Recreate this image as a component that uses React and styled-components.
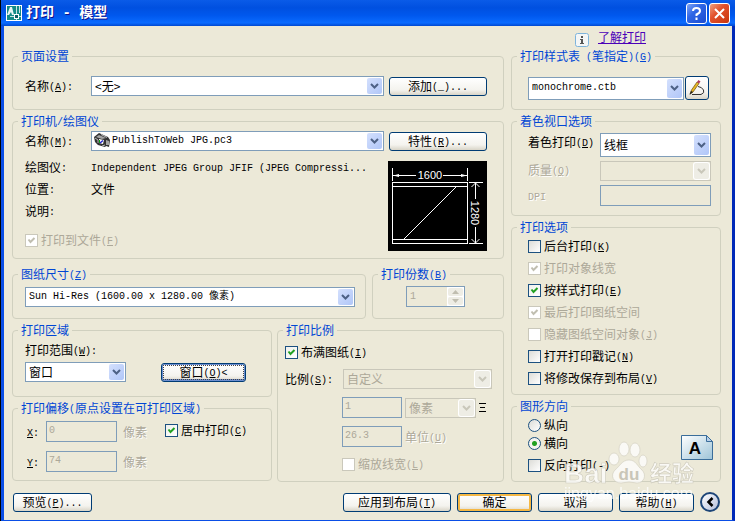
import React from 'react';
import styled, {createGlobalStyle, css} from 'styled-components';

const sans = '"Noto Sans CJK SC", "Noto Sans", sans-serif';
const mono = '"Liberation Mono", "Noto Sans CJK SC", monospace';

const face = '#ece9d8';
const muted = '#aca899';
const edge = '#7f9db9';
const navy = '#003c74';

const GlobalStyle = createGlobalStyle`
    * {
        box-sizing: border-box;
    }
    body {
        margin: 0;
        background: #000;
        color: #000;
        font: 12px/18px ${sans};
    }
    button, input, select {
        margin: 0;
        color: inherit;
        font: inherit;
    }
`;

const Window = styled.div`
    position: relative;
    display: flex;
    flex-direction: column;
    min-height: 100vh;
    margin-left: 1px;
    background: ${face};
    border: solid #0a4ee6;
    border-width: 0 3px 1px;
    border-right-color: #0029b8;
`;

/* ---------- title bar ---------- */

const TitleBar = styled.header`
    display: flex;
    align-items: center;
    gap: 2px;
    height: 26px;
    margin: 0 -3px;
    padding: 0 5px;
    background: linear-gradient(#0a5be8 0, #0050e0 30%, #0058ee 60%, #0a6bff 88%, #0048d0 100%);
`;

const Title = styled.h1`
    flex: 1;
    margin: 0 0 0 2px;
    color: #fff;
    font: bold 14px/20px ${mono};
    text-shadow: 1px 1px #0f1089;
`;

const CaptionButton = styled.button`
    display: flex;
    width: 21px;
    height: 21px;
    padding: 0;
    align-items: center;
    justify-content: center;
    border: 1px solid #fff;
    border-radius: 3px;
    background: ${({$danger}) => $danger
        ? 'linear-gradient(135deg, #f0a080, #e2522d 40%, #c8350c)'
        : 'linear-gradient(135deg, #7fa5f5, #2f66e6 40%, #1a4bd0)'};
`;

/* ---------- text ---------- */

const Latin = styled.span`
    font-family: ${mono};
    font-size: 10px;
    line-height: 1;
    vertical-align: 1px;
    white-space: pre;
`;

// разбивает строку: латиница моноширинным, "&X" - клавиша доступа
const Mixed = ({text}) => (
    <React.Fragment>
        {text.split(/([\x20-\x7e]+)/).filter(Boolean).map((part, id) => {
            if (!/^[\x20-\x7e]/.test(part)) return part;
            const [before, after] = part.split('&');
            return (
                <Latin key={id}>
                    {before}
                    {after && <u>{after[0]}</u>}
                    {after && after.slice(1)}
                </Latin>
            );
        })}
    </React.Fragment>
);

const Caption = styled.label`
    white-space: nowrap;
    ${({$off}) => $off && css`
        color: ${muted};
        text-shadow: 1px 1px #fff;
    `}
`;

const Info = styled.dl`
    display: grid;
    grid-template-columns: 66px minmax(0, 1fr);
    grid-auto-rows: 22px;
    margin: 0;
    line-height: 22px;
    white-space: nowrap;

    dd {
        margin: 0;
    }
`;

/* ---------- groups ---------- */

const Group = styled.fieldset`
    display: flex;
    flex-direction: column;
    flex: ${({$fill}) => $fill ? '1' : 'none'};
    min-width: 0;
    margin: 0 0 ${({$after}) => $after || 0}px;
    padding: 0;
    border: 1px solid #d0d0bf;
    border-radius: 4px;
`;

const Legend = styled.legend`
    height: 14px;
    margin-left: 5px;
    padding: 0 3px;
    color: #0046d5;
    line-height: 14px;
    white-space: nowrap;
`;

const GroupBody = styled.div`
    display: flex;
    flex: 1;
    flex-direction: column;
    justify-content: ${({$fill}) => $fill ? 'space-between' : 'flex-start'};
    padding: ${({$pad}) => $pad};
`;

const Panel = ({title, children, pad, fill, after}) => (
    <Group $fill={fill} $after={after}>
        <Legend><Mixed text={title}/></Legend>
        <GroupBody $pad={pad} $fill={fill}>{children}</GroupBody>
    </Group>
);

const Row = styled.div`
    display: flex;
    align-items: ${({$align}) => $align || 'center'};
    gap: ${({$gap}) => $gap || 0}px;
`;

const Stack = styled.div`
    display: flex;
    flex-direction: column;
    min-width: 0;
    gap: ${({$gap}) => $gap || 0}px;
`;

const Split = styled.div`
    display: grid;
    grid-template-columns: ${({$cols}) => $cols};
    align-items: ${({$align}) => $align || 'stretch'};
    gap: ${({$gap}) => $gap || 0}px;
`;

const HelpLine = styled.div`
    display: flex;
    justify-content: flex-end;
    gap: 9px;
    height: 23px;
    padding: 2px 86px 0 0;

    svg {
        margin-top: 5px;
    }
    a {
        color: #4b00b8;
    }
`;

const Columns = styled.main`
    display: grid;
    grid-template-columns: minmax(0, 492fr) minmax(0, 210fr);
    gap: 7px;
    padding: 0 11px 0 8px;
`;

const PrinterInfo = styled.div`
    display: flex;
    flex: 1;
    flex-direction: column;
    min-width: 0;
    gap: 9px;
    padding-top: 5px;
`;

const Preview = styled.svg`
    flex: none;
    margin-top: 10px;
    background: #000;
`;

const ScaleFields = styled(Stack)`
    padding-left: 57px;
`;

const LastCheck = styled.div`
    padding-top: 4px;
`;

const OrientationMark = styled.div`
    margin-left: auto;
    padding-top: 4px;
    line-height: 0;
`;

const Footer = styled.footer`
    display: flex;
    align-items: center;
    gap: 6px;
    padding: 10px 12px 7px 9px;
`;

const Spacer = styled.div`
    flex: 1;
`;

/* ---------- controls ---------- */

const Button = styled.button`
    flex: none;
    width: ${({$width}) => $width}px;
    height: ${({$height}) => $height || 19}px;
    padding: 0;
    border: 1px solid ${navy};
    border-radius: 3px;
    background: linear-gradient(#fff, #f4f3ee 70%, #d9d5c8);
    line-height: 16px;
    white-space: nowrap;
    ${({$kind}) => $kind === 'default' && css`
        box-shadow: inset 0 0 0 2px #f5b845;
    `}
    ${({$kind}) => $kind === 'focus' && css`
        box-shadow: inset 0 0 0 1px #6d8fd0, inset 0 -2px #6d8fd0;
        outline: 1px dotted #444;
        outline-offset: -3px;
    `}
`;

const ToolButton = styled(Button)`
    display: flex;
    align-items: center;
    justify-content: center;
`;

const RoundButton = styled.button`
    display: flex;
    width: 20px;
    height: 20px;
    padding: 0;
    align-items: center;
    justify-content: center;
    border: 2px solid #1d4578;
    border-radius: 50%;
    background: linear-gradient(135deg, #fff, #b4bfdb);
`;

const TextBox = styled.input`
    width: ${({$width}) => $width ? `${$width}px` : '100%'};
    height: 21px;
    padding: 0 2px 3px;
    border: 1px solid ${edge};
    background: ${face};
    color: ${muted};
    font: 10px/16px ${mono};
`;

const SelectBox = styled.span`
    position: relative;
    display: block;
    flex: ${({$width}) => $width ? 'none' : '1 0 auto'};
    width: ${({$width}) => $width ? `${$width}px` : 'auto'};
    height: ${({$height}) => $height || 20}px;
    min-width: 0;

    select {
        display: block;
        width: 100%;
        height: 100%;
        padding: 0 18px 0 ${({$inset}) => $inset || 3}px;
        appearance: none;
        border: 1px solid ${edge};
        border-radius: 0;
        background: #fff;
        font: ${({$latin}) => $latin ? `10px/16px ${mono}` : `12px/16px ${sans}`};
    }
    select:disabled {
        border-color: #c9c7ba;
        background: ${face};
        color: ${muted};
        opacity: 1;
    }
`;

const Arrow = styled.span`
    position: absolute;
    top: 2px;
    right: 2px;
    bottom: 2px;
    display: flex;
    width: 15px;
    align-items: center;
    justify-content: center;
    border-radius: 2px;
    background: ${({$off}) => $off ? '#eeede5' : 'linear-gradient(135deg, #d4e0fd, #b0c6f8)'};
    box-shadow: 0 0 0 1px #fff;
    color: ${({$off}) => $off ? '#c9c7ba' : '#4d6185'};
    pointer-events: none;
`;

const SelectIcon = styled.span`
    position: absolute;
    top: 2px;
    left: 3px;
    display: flex;
    pointer-events: none;
`;

const Select = ({id, value, disabled, icon, label, ...rest}) => (
    <SelectBox {...rest}>
        <select id={id} disabled={disabled} defaultValue={value} aria-label={label}>
            <option>{value}</option>
        </select>
        {icon && <SelectIcon>{icon}</SelectIcon>}
        <Arrow $off={disabled}>
            <svg width="9" height="6" viewBox="0 0 9 6">
                <path d="M1 1 L4.5 4.5 L8 1" fill="none" stroke="currentColor" strokeWidth="2"/>
            </svg>
        </Arrow>
    </SelectBox>
);

const tick = color => `url("data:image/svg+xml,%3Csvg xmlns='http://www.w3.org/2000/svg' width='11' height='11'%3E%3Cpath d='M2.5 4.5 L4.5 7 L8.5 3' fill='none' stroke='%23${color}' stroke-width='2'/%3E%3C/svg%3E")`;

const CheckLabel = styled.label`
    display: flex;
    align-items: center;
    gap: 3px;
    height: 18px;
    color: ${({$off}) => $off ? muted : '#000'};
    white-space: nowrap;

    input {
        flex: none;
        width: 13px;
        height: 13px;
        appearance: none;
        border: 1px solid #1c5180;
        background: linear-gradient(135deg, #dcdcd7, #fff);
    }
    input[type='checkbox']:checked {
        background: ${tick('21a121')}, linear-gradient(135deg, #f0f0ec, #fff);
    }
    input:disabled {
        border-color: #cac8bb;
        background: #fff;
    }
    input[type='checkbox']:disabled:checked {
        background: ${tick('c0beb0')}, #fff;
    }
    input[type='radio'] {
        border-radius: 50%;
    }
    input[type='radio']:checked {
        background: radial-gradient(circle, #21a121 0 2px, #f4f4f0 3px);
    }
`;

const Check = ({text, checked, disabled, type = 'checkbox', name}) => (
    <CheckLabel $off={disabled}>
        <input type={type} name={name} defaultChecked={checked} disabled={disabled}/>
        <span><Mixed text={text}/></span>
    </CheckLabel>
);

const Spinner = styled.span`
    display: flex;
    width: 59px;
    height: 21px;
    border: 1px solid ${edge};

    input {
        flex: 1;
        min-width: 0;
        padding: 0 3px;
        border: 0;
        background: ${face};
        color: ${muted};
        font: 10px/16px ${mono};
    }
`;

const SpinButtons = styled.span`
    display: grid;
    width: 17px;
    padding: 1px;
    gap: 1px;
    background: #fff;

    button {
        display: flex;
        padding: 0;
        align-items: center;
        justify-content: center;
        border: 0;
        border-radius: 2px;
        background: #eeede5;
    }
`;

/* ---------- drawings ---------- */

const AppIcon = () => (
    <svg width="16" height="16" viewBox="0 0 16 16">
        <rect width="16" height="16" fill="#fff"/>
        <path d="M1 1h14v14H1z" fill="#138a86"/>
        <path d="M1 10 L4 2 H6 L8 10 H6 L5 7 L3 10 Z" fill="#e8f4f4"/>
        <path d="M10.5 1 V15 M13.5 1 V8 M4 11.5 H15" stroke="#c9e4e2"/>
        <rect x="8.5" y="9.5" width="4" height="4" fill="#0b5f66" stroke="#fff"/>
    </svg>
);

const PlotterIcon = () => (
    <svg width="16" height="15" viewBox="0 0 16 15">
        <path d="M0 4 L5 0 L14 4 L16 7 L15 14 L12 13 L11 14 L4 12 L1 9 Z" fill="#333"/>
        <path d="M2 4 L5 2 L12 5 L8 6 Z M12 7 L15 8 V12 L12 12 Z" fill="#a4a4a4"/>
        <path d="M1 5 L4 7 V10 M8 13 L11 12 M7 1.5 L13 4.5" stroke="#bbb" fill="none"/>
        <path d="M5 6 L10 7 L9 11 L5 10 Z" fill="#fff"/>
        <path d="M5.5 7 V10" stroke="#0a0"/>
        <path d="M6 10 L9 7.5" stroke="#22c" strokeWidth="1.5"/>
    </svg>
);

const PaperPreview = () => (
    <Preview width="99" height="90" viewBox="0 0 99 90">
        <g fill="none" stroke="#fff">
            <path d="M4.5 7 V20 M79.5 7 V20 M4.5 21 V83 M79.5 21 V83 M4 21.5 H80 M4 25.5 H80 M4 78.5 H80 M4 82.5 H80"/>
            <path d="M16 78 L68 26"/>
            <path d="M5 14.5 H28 M55 14.5 H79"/>
            <path d="M81 21.5 H95 M81 82.5 H95 M87.5 22 V38 M87.5 66 V82"/>
            <path d="M83.5 26 L87.5 22 L91.5 26 M83.5 78 L87.5 82 L91.5 78"/>
        </g>
        <path d="M5 14.5 L11 13 V16 Z M79 14.5 L73 13 V16 Z" fill="#fff"/>
        <g fill="#fff" fontFamily="Liberation Sans, sans-serif" fontSize="11" textAnchor="middle">
            <text x="42" y="18">1600</text>
            <text transform="translate(83 52) rotate(90)">1280</text>
        </g>
    </Preview>
);

const PenIcon = () => (
    <svg width="18" height="18" viewBox="0 0 18 18">
        <path d="M4 15.5 H13 Q17 14 15.5 11 Q14 8 10 7.5" fill="none" stroke="#333"/>
        <path d="M2 15 L3.5 11 L9 3 L11 4.5 L5 13 Z" fill="#e8b820" stroke="#6b4a10" strokeWidth="0.7"/>
        <path d="M9 3 L11 4.5 L12.5 2.5 L10.5 1 Z" fill="#b03a5a"/>
        <path d="M1.5 16 L3 12 L5 13 Z" fill="#222"/>
    </svg>
);

const InfoIcon = () => (
    <svg width="14" height="14" viewBox="0 0 14 14">
        <rect x="0.5" y="0.5" width="13" height="13" rx="2" fill="#f4f6f6" stroke="#7eb4dc"/>
        <path d="M6 3 H8 V5 H6 Z M5 6 H8 V10 H9 V11 H5 V10 H6 V7 H5 Z" fill="#555"/>
    </svg>
);

const OrientationIcon = () => (
    <svg width="32" height="25" viewBox="0 0 32 25">
        <defs>
            <linearGradient id="sheet" x1="0" y1="0" x2="1" y2="1">
                <stop offset="0" stopColor="#fff"/>
                <stop offset="1" stopColor="#9ec4d8"/>
            </linearGradient>
        </defs>
        <path d="M0.5 0.5 H25.5 L31.5 6.5 V24.5 H0.5 Z" fill="url(#sheet)" stroke="#3a6d9a"/>
        <path d="M25.5 0.5 V6.5 H31.5 Z" fill="#b8cfe8" stroke="#3a6d9a"/>
        <text x="14" y="19" textAnchor="middle" fontFamily="Liberation Sans, sans-serif" fontWeight="bold" fontSize="17">A</text>
    </svg>
);

const Mark = styled.svg`
    position: absolute;
    right: 35px;
    bottom: 14px;
    pointer-events: none;
`;

const Watermark = () => (
    <Mark width="136" height="68" viewBox="0 0 136 68">
        <g fill="#fff" stroke="#c4c1b4" strokeWidth="0.6" opacity="0.75" fontFamily="Liberation Sans, Noto Sans CJK SC, sans-serif">
            <text x="3" y="45" fontWeight="bold" fontSize="28">Bai</text>
            <ellipse cx="53" cy="21" rx="5" ry="6"/>
            <ellipse cx="63" cy="11" rx="5" ry="7"/>
            <ellipse cx="74" cy="12" rx="5" ry="7"/>
            <ellipse cx="82" cy="23" rx="4" ry="6"/>
            <path d="M68 22 C75 22 76 28 81 32 C86 37 83 45 76 45 Q68 43 60 45 C52 45 49 37 54 32 C59 28 61 22 68 22 Z"/>
            <text x="89" y="43" fontWeight="bold" fontSize="22">经验</text>
            <text x="3" y="61" fontSize="16" stroke="none">jingyan.baidu.com</text>
        </g>
        <text x="68" y="42" textAnchor="middle" fill="#c9c6b8" fontFamily="Liberation Sans, sans-serif" fontWeight="bold" fontSize="17">du</text>
    </Mark>
);

/* ---------- sections ---------- */

const options = [
    {text: '后台打印(&K)'},
    {text: '打印对象线宽', checked: true, disabled: true},
    {text: '按样式打印(&E)', checked: true},
    {text: '最后打印图纸空间', checked: true, disabled: true},
    {text: '隐藏图纸空间对象(&J)', disabled: true},
    {text: '打开打印戳记(&N)'},
    {text: '将修改保存到布局(&V)'},
];

const offsets = [
    {id: 'offset-x', key: '&X:', value: '0'},
    {id: 'offset-y', key: '&Y:', value: '74'},
];

const PageSetup = () => (
    <Panel title="页面设置" pad="13px 16px 13px 12px">
        <Split $cols="61px minmax(0, 1fr) 98px" $gap={5} $align="center">
            <Caption htmlFor="setup"><Mixed text="名称(&A):"/></Caption>
            <Select id="setup" value="<无>"/>
            <Button $width={98}><Mixed text="添加(_)..."/></Button>
        </Split>
    </Panel>
);

const Printer = () => (
    <Panel title="打印机/绘图仪" pad="3px 16px 7px 12px" after={4}>
        <Split $cols="61px minmax(0, 1fr) 98px" $gap={5} $align="center">
            <Caption htmlFor="printer"><Mixed text="名称(&M):"/></Caption>
            <Select id="printer" value="PublishToWeb JPG.pc3" icon={<PlotterIcon/>} $latin $inset={20}/>
            <Button $width={98}><Mixed text="特性(&R)..."/></Button>
        </Split>
        <Row $align="flex-start">
            <PrinterInfo>
                <Info>
                    <dt><Mixed text="绘图仪:"/></dt>
                    <dd><Mixed text="Independent JPEG Group JFIF (JPEG Compressi..."/></dd>
                    <dt><Mixed text="位置:"/></dt>
                    <dd>文件</dd>
                    <dt><Mixed text="说明:"/></dt>
                    <dd/>
                </Info>
                <Check text="打印到文件(&F)" checked disabled/>
            </PrinterInfo>
            <PaperPreview/>
        </Row>
    </Panel>
);

const Copies = () => (
    <Panel title="打印份数(&B)" pad="5px 33px 11px">
        <Spinner>
            <input defaultValue="1" disabled aria-label="打印份数"/>
            <SpinButtons>
                <button type="button" disabled aria-label="增加">
                    <svg width="7" height="4"><path d="M0 4 L3.5 0 L7 4 Z" fill="#c0beb0"/></svg>
                </button>
                <button type="button" disabled aria-label="减少">
                    <svg width="7" height="4"><path d="M0 0 L3.5 4 L7 0 Z" fill="#c0beb0"/></svg>
                </button>
            </SpinButtons>
        </Spinner>
    </Panel>
);

const PlotArea = () => (
    <Panel title="打印区域" pad="4px 12px 14px">
        <Stack $gap={3}>
            <Caption htmlFor="range"><Mixed text="打印范围(&W):"/></Caption>
            <Row $gap={35}>
                <Select id="range" value="窗口" $width={101}/>
                <Button $width={85} $kind="focus"><Mixed text="窗口(&O)<"/></Button>
            </Row>
        </Stack>
    </Panel>
);

const PlotOffset = () => (
    <Panel title="打印偏移(原点设置在可打印区域)" pad="6px 12px 8px 14px">
        <Row $align="flex-start">
            <Stack $gap={9}>
                {offsets.map(({id, key, value}) => (
                    <Split key={id} $cols="19px 77px 42px" $align="center">
                        <Caption htmlFor={id}><Mixed text={key}/></Caption>
                        <TextBox id={id} defaultValue={value} disabled $width={71}/>
                        <Caption as="span" $off>像素</Caption>
                    </Split>
                ))}
            </Stack>
            <Check text="居中打印(&C)" checked/>
        </Row>
    </Panel>
);

const PlotScale = () => (
    <Panel title="打印比例" pad="6px 11px 8px 7px">
        <Stack $gap={8}>
            <Check text="布满图纸(&I)" checked/>
            <Split $cols="58px minmax(0, 1fr)" $align="center">
                <Caption htmlFor="scale"><Mixed text="比例(&S):"/></Caption>
                <Select id="scale" value="自定义" disabled/>
            </Split>
            <ScaleFields $gap={8}>
                <Row $gap={3}>
                    <TextBox defaultValue="1" disabled aria-label="比例" $width={60}/>
                    <Select value="像素" label="像素" disabled $width={71}/>
                    <svg width="7" height="9"><path d="M0 0.5 H7 M1 4.5 H6 M0 8.5 H7" stroke="#000"/></svg>
                </Row>
                <Row $gap={3}>
                    <TextBox id="units" defaultValue="26.3" disabled $width={60}/>
                    <Caption htmlFor="units" $off><Mixed text="单位(&U)"/></Caption>
                </Row>
                <Check text="缩放线宽(&L)" disabled/>
            </ScaleFields>
        </Stack>
    </Panel>
);

const Shading = () => (
    <Panel title="着色视口选项" pad="5px 9px 9px 16px">
        <Stack $gap={4}>
            <Split $cols="72px minmax(0, 1fr)">
                <Caption htmlFor="shade"><Mixed text="着色打印(&D)"/></Caption>
                <Select id="shade" value="线框" $height={24}/>
            </Split>
            <Split $cols="72px minmax(0, 1fr)">
                <Caption htmlFor="quality" $off><Mixed text="质量(&Q)"/></Caption>
                <Select id="quality" value="" disabled/>
            </Split>
            <Split $cols="72px minmax(0, 1fr)" $align="center">
                <Caption htmlFor="dpi" $off><Mixed text="DPI"/></Caption>
                <TextBox id="dpi" disabled/>
            </Split>
        </Stack>
    </Panel>
);

const Orientation = () => (
    <Panel title="图形方向" pad="3px 7px 7px 16px">
        <Row>
            <Stack>
                <Check type="radio" name="orientation" text="纵向"/>
                <Check type="radio" name="orientation" text="横向" checked/>
                <LastCheck><Check text="反向打印(-)"/></LastCheck>
            </Stack>
            <OrientationMark><OrientationIcon/></OrientationMark>
        </Row>
    </Panel>
);

const App = () => (
    <React.Fragment>
        <GlobalStyle/>
        <Window>
            <TitleBar>
                <AppIcon/>
                <Title>打印 - 模型</Title>
                <CaptionButton type="button" aria-label="帮助">
                    <svg width="11" height="13" viewBox="0 0 11 13">
                        <path d="M2 4 Q2 1 5.5 1 Q9 1 9 4 Q9 6 5.5 7.5 V9 M5.5 10.5 V13" fill="none" stroke="#fff" strokeWidth="2"/>
                    </svg>
                </CaptionButton>
                <CaptionButton type="button" aria-label="关闭" $danger>
                    <svg width="11" height="11" viewBox="0 0 11 11">
                        <path d="M1 1 L10 10 M10 1 L1 10" stroke="#fff" strokeWidth="2"/>
                    </svg>
                </CaptionButton>
            </TitleBar>
            <HelpLine>
                <InfoIcon/>
                <a href="#learn">了解打印</a>
            </HelpLine>
            <Columns>
                <Stack $gap={4}>
                    <PageSetup/>
                    <Printer/>
                    <Split $cols="minmax(0, 354fr) minmax(0, 132fr)" $gap={6}>
                        <Panel title="图纸尺寸(&Z)" pad="6px 10px 11px 12px">
                            <Select value="Sun Hi-Res (1600.00 x 1280.00 像素)" label="图纸尺寸" $latin/>
                        </Panel>
                        <Copies/>
                    </Split>
                    <Split $cols="minmax(0, 260fr) minmax(0, 227fr)" $gap={5}>
                        <Stack $gap={4}>
                            <PlotArea/>
                            <PlotOffset/>
                        </Stack>
                        <PlotScale/>
                    </Split>
                </Stack>
                <Stack $gap={4}>
                    <Panel title="打印样式表 (笔指定)(&G)" pad="13px 11px 9px 16px">
                        <Row $gap={1}>
                            <Select value="monochrome.ctb" label="打印样式表" $latin $height={23}/>
                            <ToolButton $width={24} $height={24} aria-label="编辑"><PenIcon/></ToolButton>
                        </Row>
                    </Panel>
                    <Shading/>
                    <Panel title="打印选项" pad="3px 8px 7px 16px" fill>
                        {options.map(option => <Check key={option.text} {...option}/>)}
                    </Panel>
                    <Orientation/>
                </Stack>
            </Columns>
            <Footer>
                <Button $width={79}><Mixed text="预览(&P)..."/></Button>
                <Spacer/>
                <Button $width={108}><Mixed text="应用到布局(&T)"/></Button>
                <Button $width={75} $kind="default">确定</Button>
                <Button $width={75}>取消</Button>
                <Button $width={75}><Mixed text="帮助(&H)"/></Button>
                <RoundButton type="button" aria-label="收起">
                    <svg width="8" height="10" viewBox="0 0 8 10">
                        <path d="M6.5 1 L2.5 5 L6.5 9" fill="none" stroke="#000" strokeWidth="2.5"/>
                    </svg>
                </RoundButton>
            </Footer>
            <Watermark/>
        </Window>
    </React.Fragment>
);

export default App;
